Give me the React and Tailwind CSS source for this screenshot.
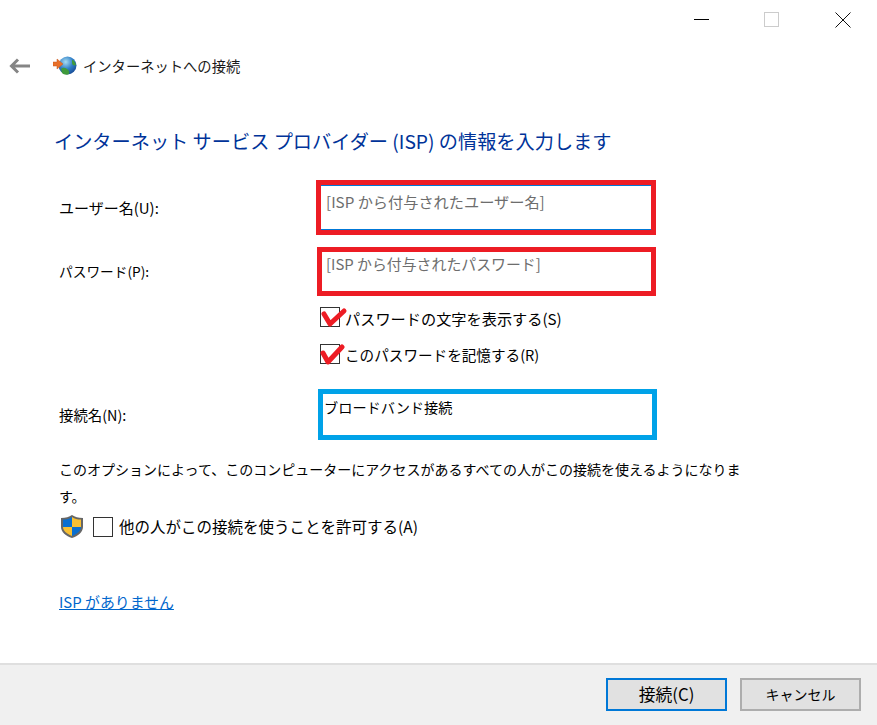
const font = { fontFamily: '"Noto Sans CJK JP", "Noto Sans", sans-serif' };

function Globe() {
  return (
    <svg width="24" height="20" viewBox="0 0 24 20" className="shrink-0">
      <defs>
        <radialGradient id="g" cx="0.4" cy="0.3" r="0.8">
          <stop offset="0" stopColor="#a8dcf0" />
          <stop offset="0.5" stopColor="#2f7fc8" />
          <stop offset="1" stopColor="#123f8a" />
        </radialGradient>
      </defs>
      <circle cx="14.5" cy="9.5" r="9" fill="url(#g)" />
      <path d="M8 13c2-2 4-1 6 0s3 3 2 5c-2 1-5 1-7-1zM19 4c2 0 3 2 4 5-2 1-4 0-4-2z" fill="#3f9a3c" />
      <path d="M0 6h4V3l6 5-6 5v-3H0z" fill="#e8702a" stroke="#c4571c" strokeWidth="0.5" />
    </svg>
  );
}

function Shield() {
  return (
    <svg width="24" height="25" viewBox="0 0 24 25" className="shrink-0">
      <path d="M12 1c3 2 6 3 11 3v9c0 5-5 9-11 11C6 22 1 18 1 13V4c5 0 8-1 11-3z" fill="#666" />
      <path d="M12 3v10H3V5.500C7 5.500 9 5 12 3z" fill="#0a6fd0" />
      <path d="M12 3c3 2 5 2.500 9 2.500V13h-9z" fill="#f8c033" />
      <path d="M3 13h9v9c-5-2-9-5-9-9z" fill="#f8c033" />
      <path d="M12 13h9c0 4-4 7-9 9z" fill="#0a6fd0" />
    </svg>
  );
}

function Tick({ d }) {
  return (
    <svg width="28" height="24" viewBox="0 0 28 24" className="absolute -left-px -top-[4px]">
      <path d={d} fill="none" stroke="#ed1c24" strokeWidth="5" strokeLinecap="round" strokeLinejoin="round" />
    </svg>
  );
}

function CheckRow({ label, tick, textClass, className = "" }) {
  return (
    <div className={"flex items-center h-[20px] " + className}>
      <div className="relative w-[20px] h-[20px] border border-[#333333] bg-white shrink-0">
        <Tick d={tick} />
      </div>
      <span className={"ml-[5px] leading-[22px] mt-[1px] text-[#000000] whitespace-nowrap " + textClass}>{label}</span>
    </div>
  );
}

export default function App() {
  return (
    <div style={font} className="w-[877px] h-[725px] bg-white flex flex-col overflow-hidden">
      <div className="h-[40px] flex justify-end items-start shrink-0">
        <div className="w-[15px] h-px bg-black mt-[19px]" />
        <div className="w-[15px] h-[15px] border border-[#cccccc] mt-[12px] ml-[55px]" />
        <svg width="16" height="16" viewBox="0 0 16 16" className="mt-[12px] ml-[56px] mr-[26px]">
          <path d="M0.500 0.500l15 15M15.500 0.500l-15 15" stroke="#111111" strokeWidth="1" />
        </svg>
      </div>

      <div className="flex items-center h-[32px] mt-[10px] shrink-0">
        <svg width="22" height="16" viewBox="0 0 22 16" className="ml-[9px] shrink-0">
          <path d="M9 1.500L2.500 8 9 14.500M3 8h18" fill="none" stroke="#858585" strokeWidth="3" />
        </svg>
        <div className="ml-[22px]"><Globe /></div>
        <span className="ml-[6px] text-[14.300px] text-[#1a1a1a] whitespace-nowrap">インターネットへの接続</span>
      </div>

      <h1 className="ml-[54px] mt-[44px] h-[30px] text-[19.200px] leading-[30px] font-normal text-[#003399] whitespace-nowrap shrink-0">
        インターネット サービス プロバイダー (ISP) の情報を入力します
      </h1>

      <div className="mt-[24px] ml-[59px] flex shrink-0 h-[55px]">
        <span className="w-[257px] text-[15px] mt-[16px] leading-[24px] text-[#000000]">ユーザー名(U):</span>
        <div className="w-[340px] h-[55px] border-[5px] border-[#ed1c24]">
          <div className="h-full border-y border-[#0078d7] px-[5px] pt-[3px] text-[15.200px] leading-[24px] text-[#6d6d6d] whitespace-nowrap">
            [ISP から付与されたユーザー名]
          </div>
        </div>
      </div>

      <div className="mt-[12px] ml-[59px] flex shrink-0 h-[49px]">
        <span className="w-[258px] text-[13.700px] mt-[12px] leading-[24px] text-[#000000]">パスワード(P):</span>
        <div className="w-[339px] h-[49px] border-[5px] border-[#ed1c24] px-[4px] text-[14.900px] leading-[24px] text-[#6d6d6d] whitespace-nowrap">
          [ISP から付与されたパスワード]
        </div>
      </div>

      <div className="ml-[320px] mt-[11px] shrink-0">
        <CheckRow label="パスワードの文字を表示する(S)" tick="M4 10l6 10L24 7" textClass="text-[15.200px]" />
        <CheckRow label="このパスワードを記憶する(R)" tick="M3 12l5 9L22 6" textClass="text-[14.600px]" className="mt-[17px]" />
      </div>

      <div className="mt-[25px] ml-[59px] flex shrink-0 h-[51px]">
        <span className="w-[259px] text-[14.400px] mt-[14px] leading-[24px] text-[#000000]">接続名(N):</span>
        <div className="w-[339px] h-[51px] border-[5px] border-[#00a2e8] px-[1px] pt-[1px] text-[14.200px] leading-[24px] text-[#000000] whitespace-nowrap">
          ブロードバンド接続
        </div>
      </div>

      <p className="ml-[59px] mt-[16px] w-[690px] text-[14px] leading-[27px] text-[#000000] shrink-0">
        このオプションによって、このコンピューターにアクセスがあるすべての人がこの接続を使えるようになります。
      </p>

      <div className="ml-[60px] mt-[4px] flex items-center shrink-0 h-[25px]">
        <Shield />
        <div className="ml-[9px] w-[20px] h-[20px] border border-[#333333] shrink-0" />
        <span className="ml-[6px] text-[15.500px] text-[#000000] whitespace-nowrap">他の人がこの接続を使うことを許可する(A)</span>
      </div>

      <div className="ml-[59px] mt-[50px] shrink-0 h-[24px]">
        <a className="text-[14.900px] leading-[24px] text-[#0066cc] underline">ISP がありません</a>
      </div>

      <div className="mt-auto h-[62px] border-t-2 border-[#dfdfdf] bg-[#f0f0f0] flex justify-end items-start pt-[13px] pr-[16px] shrink-0">
        <button className="w-[121px] h-[33px] border-[2px] border-[#0078d7] bg-[#e1e1e1] text-[16.800px] text-[#000000]">接続(C)</button>
        <button className="w-[121px] h-[33px] ml-[13px] border-[2px] border-[#adadad] bg-[#e1e1e1] text-[14px] text-[#000000]">キャンセル</button>
      </div>
    </div>
  );
}
